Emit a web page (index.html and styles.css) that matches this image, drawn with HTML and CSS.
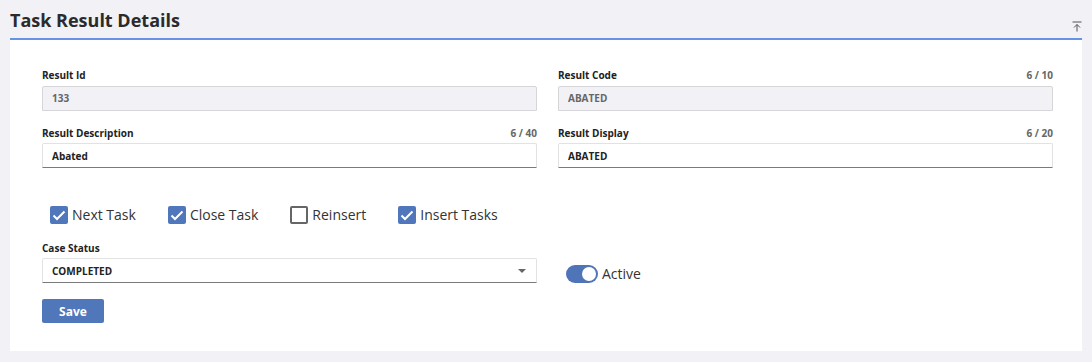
FILE: index.html
```html
<!DOCTYPE html>
<html lang="en">
<head>
  <meta charset="UTF-8" />
  <title>Task Result Details</title>
  <link rel="stylesheet" href="styles.css">
</head>
<body>

  <div class="header">
    <h1>Task Result Details</h1>
    <button class="collapse" title="Collapse">
      <svg width="10" height="11" viewBox="0 0 10 11">
        <path d="M0.5 1h9" stroke="#555" stroke-width="1" fill="none"/>
        <path d="M5 3.5v7M2 6.5l3-3 3 3" stroke="#555" stroke-width="1" fill="none"/>
      </svg>
    </button>
  </div>

  <div class="panel">
    <div class="grid">
      <div class="field">
        <div class="label-row"><label>Result Id</label></div>
        <input type="text" value="133" disabled />
      </div>
      <div class="field">
        <div class="label-row"><label>Result Code</label><span class="count">6 / 10</span></div>
        <input type="text" value="ABATED" disabled />
      </div>
      <div class="field">
        <div class="label-row"><label>Result Description</label><span class="count">6 / 40</span></div>
        <input type="text" value="Abated" />
      </div>
      <div class="field">
        <div class="label-row"><label>Result Display</label><span class="count">6 / 20</span></div>
        <input type="text" value="ABATED" />
      </div>
    </div>

    <div class="checks">
      <label class="check"><span class="box on"></span>Next Task</label>
      <label class="check"><span class="box on"></span>Close Task</label>
      <label class="check"><span class="box"></span>Reinsert</label>
      <label class="check"><span class="box on"></span>Insert Tasks</label>
    </div>

    <div class="grid">
      <div class="field">
        <div class="label-row"><label>Case Status</label></div>
        <div class="select">COMPLETED<span class="caret"></span></div>
      </div>
      <div class="toggle-wrap">
        <span class="toggle"><span class="knob"></span></span>
        <span>Active</span>
      </div>
    </div>

    <button class="save">Save</button>
  </div>

</body>
</html>
```

FILE: styles.css
```css
* { box-sizing: border-box; margin: 0; padding: 0; font-family: "Open Sans", sans-serif; }
body { background-color: #f1f1f6; color: #222; }

.header {
  display: flex;
  justify-content: space-between;
  align-items: flex-start;
  height: 38px;
  padding: 0 10px;
}
h1 {
  font-size: 18px;
  font-weight: 700;
  color: #2b2b2b;
  line-height: 24px;
  margin-top: 8px;
}
.collapse {
  background: none;
  border: none;
  margin-top: 18px;
  cursor: pointer;
}

.panel {
  margin: 0 10px;
  background: white;
  border-top: 2px solid #6891ea;
  padding: 28px 29px 28px 32px;
}
.grid {
  display: grid;
  grid-template-columns: 1fr 1fr;
  column-gap: 21px;
  row-gap: 15px;
}
.label-row {
  display: flex;
  justify-content: space-between;
  font-size: 10px;
  font-weight: 700;
  line-height: 14px;
  margin-bottom: 3px;
}
.count { color: #666; }
input, .select {
  width: 100%;
  height: 25px;
  padding: 0 9px;
  font-size: 10px;
  font-weight: 700;
  color: #222;
  border: 1px solid #e2e2e2;
  border-bottom: 1px solid #7a7a7a;
  border-radius: 2px 2px 0 0;
  background: white;
}
input:disabled {
  background: #f1f1f6;
  color: #666;
  border: 1px solid #d6d6d9;
}

.checks {
  display: flex;
  gap: 32px;
  padding-left: 8px;
  margin: 38px 0 17px;
}
.check {
  display: flex;
  align-items: center;
  gap: 4px;
  font-size: 14px;
  color: #333;
  line-height: 18px;
}
.box {
  width: 18px;
  height: 18px;
  border: 2px solid #666;
  border-radius: 2px;
}
.box.on {
  border: none;
  background: #5077bb url("data:image/svg+xml,%3Csvg xmlns='http://www.w3.org/2000/svg' viewBox='0 0 18 18'%3E%3Cpath d='M3.5 9.5l3.5 3.5 7.5-7.5' stroke='white' stroke-width='2' fill='none'/%3E%3C/svg%3E") no-repeat center / 18px 18px;
}

.select {
  display: flex;
  align-items: center;
  justify-content: space-between;
  padding-right: 10px;
}
.caret {
  width: 0;
  height: 0;
  border-left: 4px solid transparent;
  border-right: 4px solid transparent;
  border-top: 4px solid #666;
}
.toggle-wrap {
  display: flex;
  align-items: center;
  gap: 4px;
  padding: 23px 0 0 8px;
  font-size: 14px;
  color: #333;
}
.toggle {
  display: flex;
  justify-content: flex-end;
  align-items: center;
  width: 32px;
  height: 18px;
  border-radius: 9px;
  background: #4f74b8;
  padding: 2px;
}
.knob {
  width: 14px;
  height: 14px;
  border-radius: 50%;
  background: white;
}

.save {
  margin-top: 16px;
  width: 62px;
  height: 24px;
  background: #5177bb;
  color: white;
  border: none;
  border-radius: 2px;
  font-size: 12px;
  font-weight: 700;
  cursor: pointer;
}
```
